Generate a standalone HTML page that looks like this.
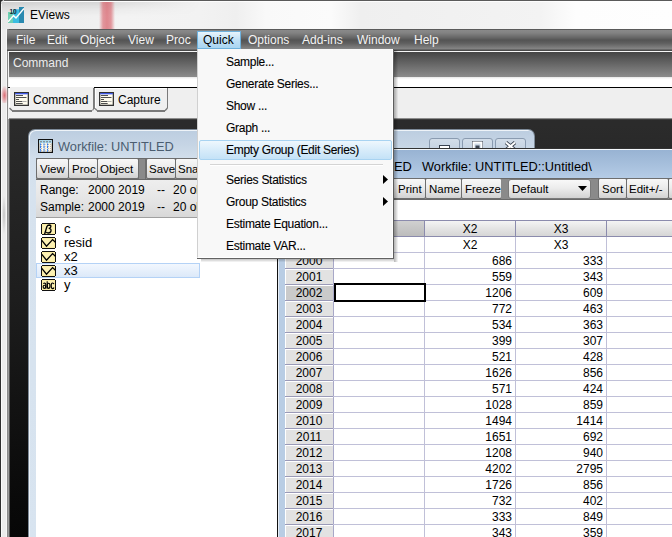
<!DOCTYPE html>
<html><head><meta charset="utf-8">
<style>
*{box-sizing:border-box}
html,body{margin:0;padding:0}
body{width:672px;height:537px;overflow:hidden;position:relative;background:#2b2b2b;font-family:"Liberation Sans",sans-serif;font-size:12px;color:#000}
.a{position:absolute}
.t{position:absolute;white-space:pre;line-height:1}
.s{-webkit-text-stroke:0.1px #000}
.mb{color:#f4f4f4}
.btn{position:absolute;border:1px solid #6e6e6e;border-radius:2px;background:linear-gradient(#f8f8f8,#ececec 45%,#dcdcdc 80%,#d2d2d2)}
</style></head>
<body>
<div class="a" style="left:0px;top:0px;width:672px;height:537px;background:linear-gradient(#2c2c2c 0px,#2b2b2b 125px,#252525 195px,#1d1d1d 300px,#131313 400px,#090909 505px,#070707 537px)"></div>
<div class="a" style="left:0px;top:0px;width:9px;height:537px;border-top-left-radius:5px;background:linear-gradient(90deg,#2e2e2e 0,#2e2e2e 1px,#fafafa 1px,#fafafa 2px,#ececec 2px,#ececec 6px,#f6f6f6 6px,#f6f6f6 7px,#8a8a8a 7px,#8a8a8a 8px,#9c9c9c 8px)"></div>
<div class="a" style="left:2px;top:195px;width:4px;height:40px;background:radial-gradient(ellipse at 50% 50%,rgba(0,0,0,.18),rgba(0,0,0,0) 70%)"></div>
<div class="a" style="left:8px;top:51px;width:1px;height:68px;background:#f4f4f4"></div>
<div class="a" style="left:1px;top:86px;width:7px;height:17px;background:radial-gradient(ellipse at 50% 55%,rgba(215,70,80,.75),rgba(215,70,80,.3) 45%,rgba(215,70,80,0) 75%)"></div>
<div class="a" style="left:4px;top:0px;width:668px;height:1px;background:#5a5a5a"></div>
<div class="a" style="left:1px;top:1px;width:671px;height:28px;border-top-left-radius:4px;background:linear-gradient(90deg,#e8e8e8 0,#eeeeee 40px,#f0f0f0 95px,#f3f3f3 120px,#f2f2f2 200px,#efefef 235px,#f9f9f9 265px,#fbfbfb 330px,#efefef 360px,#f1f1f1 450px,#f3f3f3 540px,#fdfdfd 575px,#fefefe 672px)"></div>
<div class="a" style="left:4px;top:1px;width:668px;height:1px;background:rgba(255,255,255,.8)"></div>
<div class="a" style="left:1px;top:2px;width:200px;height:14px;background:linear-gradient(rgba(0,0,0,.11),rgba(0,0,0,.04) 7px,rgba(0,0,0,0) 14px);-webkit-mask-image:linear-gradient(90deg,#000 50%,transparent)"></div>
<div class="a" style="left:1px;top:4px;width:1px;height:25px;background:rgba(255,255,255,.7)"></div>
<div class="a" style="left:99px;top:2px;width:17px;height:27px;background:linear-gradient(90deg,rgba(215,90,100,0),rgba(215,90,100,.6) 4px,rgba(215,90,100,.7) 8px,rgba(215,90,100,.6) 12px,rgba(215,90,100,0) 16px)"></div>
<svg class="a" style="left:8px;top:7px" width="16" height="16" viewBox="0 0 16 16">
<rect x="0" y="5" width="5" height="11" fill="#6ed0b4"/>
<rect x="5" y="2.3" width="6" height="13.7" fill="#3cbde0"/>
<rect x="11" y="0" width="5" height="16" fill="#2b8ab0"/>
<polyline points="0,14.8 5.5,8.6 8,11 16,1.4" fill="none" stroke="#fff" stroke-width="1.5"/>
<text x="1.4" y="7.1" font-size="6.6" font-family="Liberation Sans" font-weight="bold" fill="#1b2a33">10</text>
</svg>
<div class="t" style="left:30px;top:9px;font-size:12px;">EViews</div>
<div class="a" style="left:7px;top:29px;width:665px;height:22px;border-top-left-radius:3px;background:linear-gradient(#5a5a5a 0,#5a5a5a 1px,#8a8a8a 1px,#828282 4px,#646464 9px,#545454 11px,#5e5e5e 14px,#868686 20px,#4a4a4a 21px)"></div>
<div class="a" style="left:8px;top:51px;width:664px;height:1px;background:#f6f6f6"></div>
<div class="t mb" style="left:16px;top:34px">File</div>
<div class="t mb" style="left:47px;top:34px">Edit</div>
<div class="t mb" style="left:80px;top:34px">Object</div>
<div class="t mb" style="left:128px;top:34px">View</div>
<div class="t mb" style="left:166px;top:34px">Proc</div>
<div class="t mb" style="left:248px;top:34px">Options</div>
<div class="t mb" style="left:302px;top:34px">Add-ins</div>
<div class="t mb" style="left:357px;top:34px">Window</div>
<div class="t mb" style="left:414px;top:34px">Help</div>
<div class="a" style="left:197px;top:31px;width:44px;height:18px;border:1px solid #6fb1dc;background:linear-gradient(#e8f4fc,#c0e0f6 50%,#a9d5f2)"></div>
<div class="t" style="left:203px;top:34px;font-size:12px;">Quick</div>
<div class="a" style="left:9px;top:52px;width:663px;height:25px;background:linear-gradient(#444 0,#4a4a4a 2px,#8c8c8c)"></div>
<div class="t" style="left:13px;top:57px;font-size:12px;color:#ececec">Command</div>
<div class="a" style="left:9px;top:77px;width:663px;height:10px;background:linear-gradient(#e6e6e6 0,#fff 2px,#fff)"></div>
<div class="a" style="left:8px;top:87px;width:664px;height:32px;background:#efefef"></div>
<div class="a" style="left:94px;top:87px;width:578px;height:1px;background:#000"></div>
<div class="a" style="left:8px;top:87px;width:2px;height:1px;background:#111"></div>
<div class="a" style="left:9px;top:88px;width:1px;height:21px;background:#fff"></div>
<div class="a" style="left:93px;top:88px;width:1px;height:21px;background:#7a7a7a"></div>
<div class="a" style="left:12px;top:110px;width:80px;height:2px;background:#7a7a7a"></div>
<div class="a" style="left:94px;top:88px;width:1px;height:21px;background:#808080"></div>
<div class="a" style="left:95px;top:88px;width:72px;height:1px;background:#fff"></div>
<div class="a" style="left:95px;top:89px;width:1px;height:20px;background:#fff"></div>
<div class="a" style="left:167px;top:88px;width:1px;height:20px;background:#7a7a7a"></div>
<svg class="a" style="left:164px;top:107px" width="5" height="5" viewBox="0 0 5 5"><path d="M3.5 1L1 3.8" stroke="#7a7a7a" stroke-width="1.3"/></svg>
<div class="a" style="left:97px;top:110px;width:68px;height:2px;background:#7a7a7a"></div>
<svg class="a" style="left:14px;top:92px" width="15" height="14" viewBox="0 0 15 14">
<rect x="0.65" y="0.65" width="13.7" height="12.7" fill="#fffcee" stroke="#333" stroke-width="1.3"/>
<rect x="1.2" y="1.2" width="12.6" height="1.1" fill="#1f3ff2"/>
<path d="M2 3.5h7M2 5.5h10.5M2 7.5h3M2 9.5h6M2 11.5h6.7" stroke="#505050" stroke-width="1"/><path d="M8 9.5h4.5" stroke="#b0b0b0" stroke-width="1"/>
</svg>
<svg class="a" style="left:99px;top:92px" width="15" height="14" viewBox="0 0 15 14">
<rect x="0.65" y="0.65" width="13.7" height="12.7" fill="#fffcee" stroke="#333" stroke-width="1.3"/>
<rect x="1.2" y="1.2" width="12.6" height="1.1" fill="#1f3ff2"/>
<path d="M2 3.5h7M2 5.5h10.5M2 7.5h3M2 9.5h6M2 11.5h6.7" stroke="#505050" stroke-width="1"/><path d="M8 9.5h4.5" stroke="#b0b0b0" stroke-width="1"/>
</svg>
<div class="t" style="left:33px;top:94px;font-size:12px;">Command</div>
<div class="t" style="left:118px;top:94px;font-size:12px;">Capture</div>
<svg class="a" style="left:9px;top:107px" width="4" height="5" viewBox="0 0 4 5"><path d="M0.5 1L3 3.5" stroke="#6a6a6a" stroke-width="1.2"/></svg>
<svg class="a" style="left:92px;top:107px" width="6" height="5" viewBox="0 0 6 5"><path d="M0.5 3.5L1.5 2M3 1.5L5 3.5" stroke="#7a7a7a" stroke-width="1.2"/></svg>
<div class="a" style="left:9px;top:118px;width:663px;height:1px;background:#8c8c8c"></div>
<div class="a" style="left:9px;top:119px;width:663px;height:1px;background:#3c3c3c"></div>
<div class="a" style="left:9px;top:119px;width:1px;height:418px;background:#555"></div>
<div class="a" style="left:28px;top:129px;width:507px;height:420px;border-radius:7px 7px 0 0;background:linear-gradient(#bccde0 0,#c6d5e5 15px,#d2dfec 29px,#d6e2ee 60px,#d8e4f0 100%);border:1px solid #7d8a98;border-bottom:none;box-shadow:inset 1px 1px 0 #eef3f8"></div>
<svg class="a" style="left:38px;top:139px" width="15" height="14" viewBox="0 0 15 14">
<rect x="0.6" y="0.6" width="13.8" height="12.8" fill="#fff8e6" stroke="#111" stroke-width="1.2"/>
<rect x="1.2" y="1.2" width="12.6" height="3" fill="#a8dcf6"/>
<path d="M2 2.8h2M5 2.8h2M8 2.8h2M11 2.8h2" stroke="#777" stroke-width="1"/>
<path d="M3 5.5h1M6.5 5.5h1M10 5.5h1M3 7.5h1M6.5 7.5h1M10 7.5h1M3 9.5h1M6.5 9.5h1M10 9.5h1M3 11.5h1M6.5 11.5h1M10 11.5h1M12 5.5h1M12 7.5h1M12 9.5h1M12 11.5h1" stroke="#bbb" stroke-width="1"/>
<path d="M2.5 4.5v8.5M6 4.5v8.5M9.5 4.5v8.5" stroke="#2f7ef0" stroke-width="1.1" stroke-dasharray="2 0.6"/>
</svg>
<div class="t" style="left:58px;top:141px;font-size:12.8px;color:#4b5d70">Workfile: UNTITLED</div>
<div class="a" style="left:429px;top:138px;width:31px;height:14px;border:1px solid #8a9bb0;border-radius:3px;background:linear-gradient(#d2dde9,#c3d1e0)"></div>
<div class="a" style="left:462px;top:138px;width:31px;height:14px;border:1px solid #8a9bb0;border-radius:3px;background:linear-gradient(#d2dde9,#c3d1e0)"></div>
<div class="a" style="left:495px;top:138px;width:31px;height:14px;border:1px solid #8a9bb0;border-radius:3px;background:linear-gradient(#d2dde9,#c3d1e0)"></div>
<svg class="a" style="left:429px;top:138px" width="100" height="11" viewBox="0 0 100 11">
<rect x="10.5" y="7.5" width="10" height="4" fill="#fff" stroke="#3a4350"/>
<rect x="43.5" y="3.5" width="10" height="9" fill="none" stroke="#3a4350"/>
<rect x="44.5" y="4.5" width="8" height="7" fill="none" stroke="#fff" stroke-width="2"/>
<rect x="46.5" y="7.5" width="4" height="3" fill="#3a4350"/>
<path d="M77 4.5L86 12M86 4.5L77 12" stroke="#3a4350" stroke-width="3.6"/>
<path d="M77 4.5L86 12M86 4.5L77 12" stroke="#fff" stroke-width="2"/>
</svg>
<div class="a" style="left:36px;top:158px;width:499px;height:22px;background:#8e8e8e;border-top:1px solid #6a6a6a;border-bottom:1px solid #6a6a6a"></div>
<div class="a" style="left:138px;top:159px;width:8px;height:20px;background:#8a8a8a;border-left:1px solid #6e6e6e;border-right:1px solid #6e6e6e"></div>
<div class="btn" style="left:36px;top:158px;width:33px;height:21px"></div>
<div class="t" style="left:40px;top:164px;font-size:11.5px;">View</div>
<div class="btn" style="left:68px;top:158px;width:30px;height:21px"></div>
<div class="t" style="left:72px;top:164px;font-size:11.5px;">Proc</div>
<div class="btn" style="left:97px;top:158px;width:42px;height:21px"></div>
<div class="t" style="left:100px;top:164px;font-size:11.5px;">Object</div>
<div class="btn" style="left:146px;top:158px;width:30px;height:21px"></div>
<div class="t" style="left:149px;top:164px;font-size:11.5px;">Save</div>
<div class="btn" style="left:175px;top:158px;width:41px;height:21px"></div>
<div class="t" style="left:178px;top:164px;font-size:11.5px;">Snap</div>
<div class="a" style="left:36px;top:180px;width:499px;height:38px;background:linear-gradient(#eeeeee,#e4e4e4 60%,#d8d8d8);border-bottom:1px solid #a0a0a0"></div>
<div class="t" style="left:40px;top:184px;font-size:12px;">Range:</div>
<div class="t" style="left:88px;top:184px;font-size:12px;">2000 2019</div>
<div class="t" style="left:157px;top:184px;font-size:12px;">--</div>
<div class="t" style="left:173px;top:184px;font-size:12px;">20 obs</div>
<div class="t" style="left:40px;top:201px;font-size:12px;">Sample:</div>
<div class="t" style="left:88px;top:201px;font-size:12px;">2000 2019</div>
<div class="t" style="left:157px;top:201px;font-size:12px;">--</div>
<div class="t" style="left:173px;top:201px;font-size:12px;">20 obs</div>
<div class="a" style="left:36px;top:218px;width:499px;height:330px;background:#fff"></div>
<div class="a" style="left:36px;top:263px;width:164px;height:15px;border:1px solid #b4d2f6;background:linear-gradient(#f2f7fe,#dce9f9)"></div>
<svg class="a" style="left:41px;top:223px" width="15" height="12" viewBox="0 0 15 12"><path d="M1 0.5h13M0.5 1v10M14.5 1v10M1 11.5h13" stroke="#111" stroke-width="1"/><rect x="1" y="1" width="13" height="10" fill="#fbeda2"/><rect x="2" y="2" width="11" height="8" fill="#fcf1b4"/><path d="M3.6 11.2L5.9 3.6Q6.6 2 8.2 2Q10.2 2.1 9.8 3.8Q9.5 5 7.8 5.4Q10.4 5.6 10 8Q9.6 10 7.4 10Q5.8 10 5.3 9" fill="none" stroke="#000" stroke-width="1.35"/></svg>
<svg class="a" style="left:41px;top:237px" width="15" height="12" viewBox="0 0 15 12"><path d="M1 0.5h13M0.5 1v10M14.5 1v10M1 11.5h13" stroke="#111" stroke-width="1"/><rect x="1" y="1" width="13" height="10" fill="#fbeda2"/><rect x="2" y="2" width="11" height="8" fill="#fcf1b4"/><polyline points="0.8,3.4 5.5,9.2 11.6,2.6 14.4,5.2" fill="none" stroke="#000" stroke-width="1.3"/></svg>
<svg class="a" style="left:41px;top:251px" width="15" height="12" viewBox="0 0 15 12"><path d="M1 0.5h13M0.5 1v10M14.5 1v10M1 11.5h13" stroke="#111" stroke-width="1"/><rect x="1" y="1" width="13" height="10" fill="#fbeda2"/><rect x="2" y="2" width="11" height="8" fill="#fcf1b4"/><polyline points="0.8,3.4 5.5,9.2 11.6,2.6 14.4,5.2" fill="none" stroke="#000" stroke-width="1.3"/></svg>
<svg class="a" style="left:41px;top:265px" width="15" height="12" viewBox="0 0 15 12"><path d="M1 0.5h13M0.5 1v10M14.5 1v10M1 11.5h13" stroke="#111" stroke-width="1"/><rect x="1" y="1" width="13" height="10" fill="#fbeda2"/><rect x="2" y="2" width="11" height="8" fill="#fcf1b4"/><polyline points="0.8,3.4 5.5,9.2 11.6,2.6 14.4,5.2" fill="none" stroke="#000" stroke-width="1.3"/></svg>
<svg class="a" style="left:41px;top:279px" width="15" height="12" viewBox="0 0 15 12"><path d="M1 0.5h13M0.5 1v10M14.5 1v10M1 11.5h13" stroke="#111" stroke-width="1"/><rect x="1" y="1" width="13" height="10" fill="#fbeda2"/><rect x="2" y="2" width="11" height="8" fill="#fcf1b4"/><g fill="none" stroke="#000" stroke-width="1.15"><path d="M2.3 4.6Q3.4 3.6 4.4 4.4Q4.8 4.8 4.8 6V9.6"/><ellipse cx="3.4" cy="7.8" rx="1.25" ry="1.6"/><path d="M6.2 2.2V9.6"/><ellipse cx="7.6" cy="6.8" rx="1.35" ry="2.6"/><path d="M12.9 5.1Q12.6 4 11.6 4Q10.2 4 10.2 6.8Q10.2 9.6 11.6 9.6Q12.6 9.6 12.9 8.5"/></g></svg>
<div class="t" style="left:64px;top:222px;font-size:13px;">c</div>
<div class="t" style="left:64px;top:236px;font-size:13px;">resid</div>
<div class="t" style="left:64px;top:250px;font-size:13px;">x2</div>
<div class="t" style="left:64px;top:264px;font-size:13px;">x3</div>
<div class="t" style="left:64px;top:278px;font-size:13px;">y</div>
<div class="a" style="left:277px;top:148px;width:400px;height:400px;background:#b9cde4;border-left:1px solid #111;border-top:1px solid #333"></div>
<div class="a" style="left:278px;top:149px;width:400px;height:1px;background:#f4f8fc"></div>
<div class="a" style="left:278px;top:149px;width:1px;height:400px;background:#e8eef6"></div>
<div class="a" style="left:279px;top:150px;width:400px;height:28px;background:linear-gradient(#98b3d3,#a6bfdc 50%,#b5cce6)"></div>
<div class="t" style="left:394px;top:161px;font-size:12.8px;">ED</div>
<div class="t" style="left:422px;top:161px;font-size:12.8px;">Workfile: UNTITLED::Untitled\</div>
<div class="a" style="left:285px;top:178px;width:400px;height:22px;background:#8e8e8e;border-top:1px solid #6a6a6a;border-bottom:1px solid #6a6a6a"></div>
<div class="btn" style="left:390px;top:178px;width:36px;height:21px"></div>
<div class="t" style="left:398px;top:184px;font-size:11.5px;">Print</div>
<div class="btn" style="left:425px;top:178px;width:37px;height:21px"></div>
<div class="t" style="left:429px;top:184px;font-size:11.5px;">Name</div>
<div class="btn" style="left:461px;top:178px;width:41px;height:21px"></div>
<div class="t" style="left:465px;top:184px;font-size:11.5px;">Freeze</div>
<div class="a" style="left:501px;top:179px;width:7px;height:20px;background:#8a8a8a"></div>
<div class="a" style="left:591px;top:179px;width:7px;height:20px;background:#8a8a8a"></div>
<div class="btn" style="left:508px;top:179px;width:83px;height:20px;border-radius:3px;border-color:#7a7a7a"></div>
<div class="t" style="left:512px;top:184px;font-size:11.5px;">Default</div>
<svg class="a" style="left:578px;top:186px" width="9" height="5" viewBox="0 0 9 5"><path d="M0 0h9L4.5 5z" fill="#000"/></svg>
<div class="btn" style="left:598px;top:178px;width:29px;height:21px"></div>
<div class="t" style="left:602px;top:184px;font-size:11.5px;">Sort</div>
<div class="btn" style="left:626px;top:178px;width:43px;height:21px"></div>
<div class="t" style="left:629px;top:184px;font-size:11.5px;">Edit+/-</div>
<div class="btn" style="left:668px;top:178px;width:33px;height:21px"></div>
<div class="a" style="left:285px;top:200px;width:400px;height:20px;background:#fff"></div>
<div class="a" style="left:285px;top:220px;width:400px;height:330px;background:#fff"></div>
<div class="a" style="left:285px;top:221px;width:48px;height:15px;background:linear-gradient(#d0d0d0,#bcbcbc)"></div>
<div class="a" style="left:334px;top:221px;width:90px;height:15px;background:linear-gradient(#d0d0d0,#bcbcbc)"></div>
<div class="a" style="left:425px;top:221px;width:90px;height:15px;background:linear-gradient(#f4f4f4,#e4e4e4 50%,#d6d6d6)"></div>
<div class="a" style="left:516px;top:221px;width:90px;height:15px;background:linear-gradient(#f4f4f4,#e4e4e4 50%,#d6d6d6)"></div>
<div class="a" style="left:607px;top:221px;width:90px;height:15px;background:linear-gradient(#f4f4f4,#e4e4e4 50%,#d6d6d6)"></div>
<div class="a" style="left:285px;top:220px;width:400px;height:1px;background:#8b8bad"></div>
<div class="a" style="left:285px;top:236px;width:400px;height:1px;background:#8b8bad"></div>
<div class="a" style="left:333px;top:220px;width:1px;height:16px;background:#8b8bad"></div>
<div class="a" style="left:333px;top:237px;width:1px;height:313px;background:#a8a8c8"></div>
<div class="a" style="left:424px;top:220px;width:1px;height:16px;background:#8b8bad"></div>
<div class="a" style="left:424px;top:237px;width:1px;height:313px;background:#c0c0d8"></div>
<div class="a" style="left:515px;top:220px;width:1px;height:16px;background:#8b8bad"></div>
<div class="a" style="left:515px;top:237px;width:1px;height:313px;background:#c0c0d8"></div>
<div class="a" style="left:606px;top:220px;width:1px;height:16px;background:#8b8bad"></div>
<div class="a" style="left:606px;top:237px;width:1px;height:313px;background:#c0c0d8"></div>
<div class="t" style="left:425px;top:223px;font-size:12px;width:90px;text-align:center">X2</div>
<div class="t" style="left:516px;top:223px;font-size:12px;width:90px;text-align:center">X3</div>
<div class="t" style="left:425px;top:239px;font-size:12px;width:90px;text-align:center">X2</div>
<div class="t" style="left:516px;top:239px;font-size:12px;width:90px;text-align:center">X3</div>
<div class="a" style="left:285px;top:252px;width:400px;height:1px;background:#c0c0d8"></div>
<div class="a" style="left:285px;top:253px;width:48px;height:15px;background:#e2e2e2;border-top:1px solid #fff;border-left:1px solid #fff"></div>
<div class="a" style="left:285px;top:268px;width:400px;height:1px;background:#c0c0d8"></div>
<div class="a" style="left:285px;top:268px;width:48px;height:1px;background:#9a9ab8"></div>
<div class="t" style="left:285px;top:255px;font-size:12px;width:48px;text-align:center">2000</div>
<div class="t" style="left:425px;top:255px;font-size:12px;width:87px;text-align:right">686</div>
<div class="t" style="left:516px;top:255px;font-size:12px;width:87px;text-align:right">333</div>
<div class="a" style="left:285px;top:269px;width:48px;height:15px;background:#e2e2e2;border-top:1px solid #fff;border-left:1px solid #fff"></div>
<div class="a" style="left:285px;top:284px;width:400px;height:1px;background:#c0c0d8"></div>
<div class="a" style="left:285px;top:284px;width:48px;height:1px;background:#9a9ab8"></div>
<div class="t" style="left:285px;top:271px;font-size:12px;width:48px;text-align:center">2001</div>
<div class="t" style="left:425px;top:271px;font-size:12px;width:87px;text-align:right">559</div>
<div class="t" style="left:516px;top:271px;font-size:12px;width:87px;text-align:right">343</div>
<div class="a" style="left:285px;top:285px;width:48px;height:15px;background:#cacaca;border-top:1px solid #fff;border-left:1px solid #fff"></div>
<div class="a" style="left:285px;top:300px;width:400px;height:1px;background:#c0c0d8"></div>
<div class="a" style="left:285px;top:300px;width:48px;height:1px;background:#9a9ab8"></div>
<div class="t" style="left:285px;top:287px;font-size:12px;width:48px;text-align:center">2002</div>
<div class="t" style="left:425px;top:287px;font-size:12px;width:87px;text-align:right">1206</div>
<div class="t" style="left:516px;top:287px;font-size:12px;width:87px;text-align:right">609</div>
<div class="a" style="left:285px;top:301px;width:48px;height:15px;background:#e2e2e2;border-top:1px solid #fff;border-left:1px solid #fff"></div>
<div class="a" style="left:285px;top:316px;width:400px;height:1px;background:#c0c0d8"></div>
<div class="a" style="left:285px;top:316px;width:48px;height:1px;background:#9a9ab8"></div>
<div class="t" style="left:285px;top:303px;font-size:12px;width:48px;text-align:center">2003</div>
<div class="t" style="left:425px;top:303px;font-size:12px;width:87px;text-align:right">772</div>
<div class="t" style="left:516px;top:303px;font-size:12px;width:87px;text-align:right">463</div>
<div class="a" style="left:285px;top:317px;width:48px;height:15px;background:#e2e2e2;border-top:1px solid #fff;border-left:1px solid #fff"></div>
<div class="a" style="left:285px;top:332px;width:400px;height:1px;background:#c0c0d8"></div>
<div class="a" style="left:285px;top:332px;width:48px;height:1px;background:#9a9ab8"></div>
<div class="t" style="left:285px;top:319px;font-size:12px;width:48px;text-align:center">2004</div>
<div class="t" style="left:425px;top:319px;font-size:12px;width:87px;text-align:right">534</div>
<div class="t" style="left:516px;top:319px;font-size:12px;width:87px;text-align:right">363</div>
<div class="a" style="left:285px;top:333px;width:48px;height:15px;background:#e2e2e2;border-top:1px solid #fff;border-left:1px solid #fff"></div>
<div class="a" style="left:285px;top:348px;width:400px;height:1px;background:#c0c0d8"></div>
<div class="a" style="left:285px;top:348px;width:48px;height:1px;background:#9a9ab8"></div>
<div class="t" style="left:285px;top:335px;font-size:12px;width:48px;text-align:center">2005</div>
<div class="t" style="left:425px;top:335px;font-size:12px;width:87px;text-align:right">399</div>
<div class="t" style="left:516px;top:335px;font-size:12px;width:87px;text-align:right">307</div>
<div class="a" style="left:285px;top:349px;width:48px;height:15px;background:#e2e2e2;border-top:1px solid #fff;border-left:1px solid #fff"></div>
<div class="a" style="left:285px;top:364px;width:400px;height:1px;background:#c0c0d8"></div>
<div class="a" style="left:285px;top:364px;width:48px;height:1px;background:#9a9ab8"></div>
<div class="t" style="left:285px;top:351px;font-size:12px;width:48px;text-align:center">2006</div>
<div class="t" style="left:425px;top:351px;font-size:12px;width:87px;text-align:right">521</div>
<div class="t" style="left:516px;top:351px;font-size:12px;width:87px;text-align:right">428</div>
<div class="a" style="left:285px;top:365px;width:48px;height:15px;background:#e2e2e2;border-top:1px solid #fff;border-left:1px solid #fff"></div>
<div class="a" style="left:285px;top:380px;width:400px;height:1px;background:#c0c0d8"></div>
<div class="a" style="left:285px;top:380px;width:48px;height:1px;background:#9a9ab8"></div>
<div class="t" style="left:285px;top:367px;font-size:12px;width:48px;text-align:center">2007</div>
<div class="t" style="left:425px;top:367px;font-size:12px;width:87px;text-align:right">1626</div>
<div class="t" style="left:516px;top:367px;font-size:12px;width:87px;text-align:right">856</div>
<div class="a" style="left:285px;top:381px;width:48px;height:15px;background:#e2e2e2;border-top:1px solid #fff;border-left:1px solid #fff"></div>
<div class="a" style="left:285px;top:396px;width:400px;height:1px;background:#c0c0d8"></div>
<div class="a" style="left:285px;top:396px;width:48px;height:1px;background:#9a9ab8"></div>
<div class="t" style="left:285px;top:383px;font-size:12px;width:48px;text-align:center">2008</div>
<div class="t" style="left:425px;top:383px;font-size:12px;width:87px;text-align:right">571</div>
<div class="t" style="left:516px;top:383px;font-size:12px;width:87px;text-align:right">424</div>
<div class="a" style="left:285px;top:397px;width:48px;height:15px;background:#e2e2e2;border-top:1px solid #fff;border-left:1px solid #fff"></div>
<div class="a" style="left:285px;top:412px;width:400px;height:1px;background:#c0c0d8"></div>
<div class="a" style="left:285px;top:412px;width:48px;height:1px;background:#9a9ab8"></div>
<div class="t" style="left:285px;top:399px;font-size:12px;width:48px;text-align:center">2009</div>
<div class="t" style="left:425px;top:399px;font-size:12px;width:87px;text-align:right">1028</div>
<div class="t" style="left:516px;top:399px;font-size:12px;width:87px;text-align:right">859</div>
<div class="a" style="left:285px;top:413px;width:48px;height:15px;background:#e2e2e2;border-top:1px solid #fff;border-left:1px solid #fff"></div>
<div class="a" style="left:285px;top:428px;width:400px;height:1px;background:#c0c0d8"></div>
<div class="a" style="left:285px;top:428px;width:48px;height:1px;background:#9a9ab8"></div>
<div class="t" style="left:285px;top:415px;font-size:12px;width:48px;text-align:center">2010</div>
<div class="t" style="left:425px;top:415px;font-size:12px;width:87px;text-align:right">1494</div>
<div class="t" style="left:516px;top:415px;font-size:12px;width:87px;text-align:right">1414</div>
<div class="a" style="left:285px;top:429px;width:48px;height:15px;background:#e2e2e2;border-top:1px solid #fff;border-left:1px solid #fff"></div>
<div class="a" style="left:285px;top:444px;width:400px;height:1px;background:#c0c0d8"></div>
<div class="a" style="left:285px;top:444px;width:48px;height:1px;background:#9a9ab8"></div>
<div class="t" style="left:285px;top:431px;font-size:12px;width:48px;text-align:center">2011</div>
<div class="t" style="left:425px;top:431px;font-size:12px;width:87px;text-align:right">1651</div>
<div class="t" style="left:516px;top:431px;font-size:12px;width:87px;text-align:right">692</div>
<div class="a" style="left:285px;top:445px;width:48px;height:15px;background:#e2e2e2;border-top:1px solid #fff;border-left:1px solid #fff"></div>
<div class="a" style="left:285px;top:460px;width:400px;height:1px;background:#c0c0d8"></div>
<div class="a" style="left:285px;top:460px;width:48px;height:1px;background:#9a9ab8"></div>
<div class="t" style="left:285px;top:447px;font-size:12px;width:48px;text-align:center">2012</div>
<div class="t" style="left:425px;top:447px;font-size:12px;width:87px;text-align:right">1208</div>
<div class="t" style="left:516px;top:447px;font-size:12px;width:87px;text-align:right">940</div>
<div class="a" style="left:285px;top:461px;width:48px;height:15px;background:#e2e2e2;border-top:1px solid #fff;border-left:1px solid #fff"></div>
<div class="a" style="left:285px;top:476px;width:400px;height:1px;background:#c0c0d8"></div>
<div class="a" style="left:285px;top:476px;width:48px;height:1px;background:#9a9ab8"></div>
<div class="t" style="left:285px;top:463px;font-size:12px;width:48px;text-align:center">2013</div>
<div class="t" style="left:425px;top:463px;font-size:12px;width:87px;text-align:right">4202</div>
<div class="t" style="left:516px;top:463px;font-size:12px;width:87px;text-align:right">2795</div>
<div class="a" style="left:285px;top:477px;width:48px;height:15px;background:#e2e2e2;border-top:1px solid #fff;border-left:1px solid #fff"></div>
<div class="a" style="left:285px;top:492px;width:400px;height:1px;background:#c0c0d8"></div>
<div class="a" style="left:285px;top:492px;width:48px;height:1px;background:#9a9ab8"></div>
<div class="t" style="left:285px;top:479px;font-size:12px;width:48px;text-align:center">2014</div>
<div class="t" style="left:425px;top:479px;font-size:12px;width:87px;text-align:right">1726</div>
<div class="t" style="left:516px;top:479px;font-size:12px;width:87px;text-align:right">856</div>
<div class="a" style="left:285px;top:493px;width:48px;height:15px;background:#e2e2e2;border-top:1px solid #fff;border-left:1px solid #fff"></div>
<div class="a" style="left:285px;top:508px;width:400px;height:1px;background:#c0c0d8"></div>
<div class="a" style="left:285px;top:508px;width:48px;height:1px;background:#9a9ab8"></div>
<div class="t" style="left:285px;top:495px;font-size:12px;width:48px;text-align:center">2015</div>
<div class="t" style="left:425px;top:495px;font-size:12px;width:87px;text-align:right">732</div>
<div class="t" style="left:516px;top:495px;font-size:12px;width:87px;text-align:right">402</div>
<div class="a" style="left:285px;top:509px;width:48px;height:15px;background:#e2e2e2;border-top:1px solid #fff;border-left:1px solid #fff"></div>
<div class="a" style="left:285px;top:524px;width:400px;height:1px;background:#c0c0d8"></div>
<div class="a" style="left:285px;top:524px;width:48px;height:1px;background:#9a9ab8"></div>
<div class="t" style="left:285px;top:511px;font-size:12px;width:48px;text-align:center">2016</div>
<div class="t" style="left:425px;top:511px;font-size:12px;width:87px;text-align:right">333</div>
<div class="t" style="left:516px;top:511px;font-size:12px;width:87px;text-align:right">849</div>
<div class="a" style="left:285px;top:525px;width:48px;height:15px;background:#e2e2e2;border-top:1px solid #fff;border-left:1px solid #fff"></div>
<div class="a" style="left:285px;top:540px;width:400px;height:1px;background:#c0c0d8"></div>
<div class="a" style="left:285px;top:540px;width:48px;height:1px;background:#9a9ab8"></div>
<div class="t" style="left:285px;top:527px;font-size:12px;width:48px;text-align:center">2017</div>
<div class="t" style="left:425px;top:527px;font-size:12px;width:87px;text-align:right">343</div>
<div class="t" style="left:516px;top:527px;font-size:12px;width:87px;text-align:right">359</div>
<div class="a" style="left:285px;top:252px;width:48px;height:1px;background:#8b8bad"></div>
<div class="a" style="left:334px;top:283px;width:92px;height:19px;border:2px solid #000"></div>
<div class="a" style="left:394px;top:50px;width:4px;height:212px;background:linear-gradient(90deg,rgba(0,0,0,.26) 0,rgba(0,0,0,.26) 1px,rgba(0,0,0,.2) 1px,rgba(0,0,0,.2) 2px,rgba(0,0,0,.13) 2px,rgba(0,0,0,.13) 3px,rgba(0,0,0,.06) 3px)"></div>
<div class="a" style="left:201px;top:259px;width:193px;height:3px;background:linear-gradient(rgba(0,0,0,.2) 0,rgba(0,0,0,.2) 1px,rgba(0,0,0,.13) 1px,rgba(0,0,0,.13) 2px,rgba(0,0,0,.06) 2px)"></div>
<div class="a" style="left:197px;top:49px;width:196px;height:209px;background:#f8f8f8;border-left:1px solid #d0d0d0;border-right:1px solid #fff;border-bottom:1px solid #fff"></div>
<div class="a" style="left:393px;top:49px;width:1px;height:210px;background:#5e5e5e"></div>
<div class="a" style="left:197px;top:258px;width:197px;height:1px;background:#626262"></div>
<div class="a" style="left:199px;top:140px;width:193px;height:20px;border:1px solid #a8d3f1;border-radius:2px;background:linear-gradient(#eef7fd,#d8ecfa 50%,#c4e2f7)"></div>
<div class="a" style="left:210px;top:164px;width:173px;height:1px;background:#d4d4d4"></div>
<div class="a" style="left:210px;top:165px;width:173px;height:1px;background:#fff"></div>
<svg class="a" style="left:383px;top:175px" width="5" height="9" viewBox="0 0 5 9"><path d="M0 0L5 4.5L0 9z" fill="#000"/></svg>
<svg class="a" style="left:383px;top:197px" width="5" height="9" viewBox="0 0 5 9"><path d="M0 0L5 4.5L0 9z" fill="#000"/></svg>
<div class="t s" style="left:226px;top:56px;font-size:12px;letter-spacing:-0.28px">Sample...</div>
<div class="t s" style="left:226px;top:78px;font-size:12px;letter-spacing:-0.28px">Generate Series...</div>
<div class="t s" style="left:226px;top:100px;font-size:12px;letter-spacing:-0.28px">Show ...</div>
<div class="t s" style="left:226px;top:122px;font-size:12px;letter-spacing:-0.28px">Graph ...</div>
<div class="t s" style="left:226px;top:144px;font-size:12px;letter-spacing:-0.28px">Empty Group (Edit Series)</div>
<div class="t s" style="left:226px;top:174px;font-size:12px;letter-spacing:-0.28px">Series Statistics</div>
<div class="t s" style="left:226px;top:196px;font-size:12px;letter-spacing:-0.28px">Group Statistics</div>
<div class="t s" style="left:226px;top:218px;font-size:12px;letter-spacing:-0.28px">Estimate Equation...</div>
<div class="t s" style="left:226px;top:240px;font-size:12px;letter-spacing:-0.28px">Estimate VAR...</div>
</body></html>
